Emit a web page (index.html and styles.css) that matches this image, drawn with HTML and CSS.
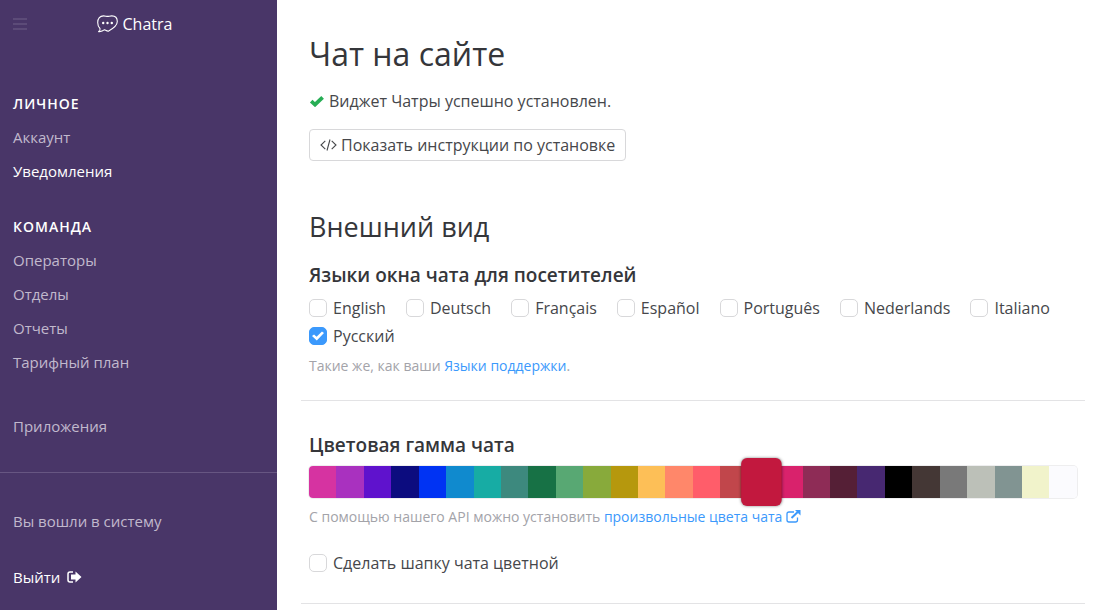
FILE: index.html
```html
<!DOCTYPE html>
<html lang="ru">
<head>
  <meta charset="UTF-8">
  <meta name="viewport" content="width=device-width, initial-scale=1.0">
  <title>Chatra</title>
  <link rel="stylesheet" href="styles.css">
</head>
<body>
<div class="app">
  <aside class="sidebar">
    <header class="topbar">
      <button type="button" class="menu-button" aria-label="Меню">
        <svg width="14" height="12" viewBox="0 0 14 12"><path d="M0 1h14M0 6h14M0 11h14" stroke="currentColor" stroke-width="2"/></svg>
      </button>
      <a href="#" class="brand">
        <svg width="21" height="18" viewBox="0 0 21 18" fill="none" stroke="currentColor">
          <path d="M1.6 16.6C3 15.8 3.400 14.900 3 13.500C1.300 12 .7 10 .7 7.600C.7 3.500 3 .9 6.500 .9C8.300 .9 9.400 1.400 10.600 1.400C11.800 1.400 13 .9 14.800 .9C18.300 .9 20.300 3.400 20.300 6.600C20.300 11 15.500 14 11.300 16.200C9.600 15.800 8.800 15.200 7.600 14.700C5.800 16.200 4 16.900 1.600 16.600Z" stroke-width="1.100" stroke-linejoin="round"/>
          <g fill="currentColor" stroke="none"><circle cx="6.200" cy="8" r="1.200"/><circle cx="10.500" cy="8" r="1.200"/><circle cx="14.800" cy="8" r="1.200"/></g>
        </svg>
        <span>Chatra</span>
      </a>
    </header>

    <nav class="nav">
      <h2 class="nav-title">Личное</h2>
      <a href="#" class="nav-link">Аккаунт</a>
      <a href="#" class="nav-link active">Уведомления</a>

      <h2 class="nav-title">Команда</h2>
      <a href="#" class="nav-link">Операторы</a>
      <a href="#" class="nav-link">Отделы</a>
      <a href="#" class="nav-link">Отчеты</a>
      <a href="#" class="nav-link">Тарифный план</a>

      <a href="#" class="nav-link nav-apps">Приложения</a>
    </nav>

    <footer class="session">
      <p>Вы вошли в систему</p>
      <a href="#" class="logout">Выйти
        <svg width="15" height="12" viewBox="0 0 15 12"><path d="M6 1H3Q1 1 1 3V9Q1 11 3 11H6" fill="none" stroke="currentColor" stroke-width="1.500"/><path d="M4 3.500H8.500V.5L14.500 6L8.500 11.500V8.500H4Z" fill="currentColor"/></svg>
      </a>
    </footer>
  </aside>

  <main class="content">
    <section class="section install">
      <h1>Чат на сайте</h1>
      <p class="status">
        <svg width="16" height="12" viewBox="0 0 16 12"><path d="M2.200 6.200L6 9.600L13.600 2.300" fill="none" stroke="currentColor" stroke-width="3.800"/></svg>
        Виджет Чатры успешно установлен.
      </p>
      <button type="button" class="button">
        <svg width="17" height="12" viewBox="0 0 17 12" fill="none" stroke="currentColor" stroke-width="1.100"><path d="M5.300 1.800L1 6L5.300 10.200M11.700 1.800L16 6L11.700 10.200M10 .5L7 11.500"/></svg>
        Показать инструкции по установке
      </button>
    </section>

    <section class="section languages">
      <h2>Внешний вид</h2>
      <h3>Языки окна чата для посетителей</h3>
      <div class="options">
        <label class="check"><input type="checkbox">English</label>
        <label class="check"><input type="checkbox">Deutsch</label>
        <label class="check"><input type="checkbox">Français</label>
        <label class="check"><input type="checkbox">Español</label>
        <label class="check"><input type="checkbox">Português</label>
        <label class="check"><input type="checkbox">Nederlands</label>
        <label class="check"><input type="checkbox">Italiano</label>
        <label class="check"><input type="checkbox" checked>Русский</label>
      </div>
      <p class="hint">Такие же, как ваши <a href="#">Языки поддержки</a>.</p>
    </section>

    <section class="section colors">
      <h3>Цветовая гамма чата</h3>
      <div class="palette" role="radiogroup" aria-label="Цветовая гамма чата">
        <input type="radio" name="color" class="c1" aria-label="#d633a1">
        <input type="radio" name="color" class="c2" aria-label="#a931bf">
        <input type="radio" name="color" class="c3" aria-label="#5f12cd">
        <input type="radio" name="color" class="c4" aria-label="#0c0c7f">
        <input type="radio" name="color" class="c5" aria-label="#0033f3">
        <input type="radio" name="color" class="c6" aria-label="#108ace">
        <input type="radio" name="color" class="c7" aria-label="#17aca4">
        <input type="radio" name="color" class="c8" aria-label="#3d897e">
        <input type="radio" name="color" class="c9" aria-label="#177145">
        <input type="radio" name="color" class="c10" aria-label="#58a873">
        <input type="radio" name="color" class="c11" aria-label="#88aa3b">
        <input type="radio" name="color" class="c12" aria-label="#b6980d">
        <input type="radio" name="color" class="c13" aria-label="#fdbf57">
        <input type="radio" name="color" class="c14" aria-label="#ff876a">
        <input type="radio" name="color" class="c15" aria-label="#ff5d6a">
        <input type="radio" name="color" class="c16" aria-label="#c1464b">
        <input type="radio" name="color" class="c17" aria-label="#c2183e" checked>
        <input type="radio" name="color" class="c18" aria-label="#d9226c">
        <input type="radio" name="color" class="c19" aria-label="#8e2c56">
        <input type="radio" name="color" class="c20" aria-label="#551f36">
        <input type="radio" name="color" class="c21" aria-label="#472871">
        <input type="radio" name="color" class="c22" aria-label="#000000">
        <input type="radio" name="color" class="c23" aria-label="#443735">
        <input type="radio" name="color" class="c24" aria-label="#797979">
        <input type="radio" name="color" class="c25" aria-label="#bcc0b8">
        <input type="radio" name="color" class="c26" aria-label="#819492">
        <input type="radio" name="color" class="c27" aria-label="#f1f3cb">
        <input type="radio" name="color" class="c28" aria-label="#fbfbfe">
      </div>
      <p class="hint">С помощью нашего API можно установить <a href="#">произвольные цвета чата <svg width="15" height="13" viewBox="0 0 15 13"><path d="M8 2H3Q1 2 1 4V10Q1 12 3 12H9.500Q11.500 12 11.500 10V7.500" fill="none" stroke="currentColor" stroke-width="1.300"/><path d="M5.500 8L12 1.800" stroke="currentColor" stroke-width="2"/><path d="M9 0H14.500V5.500Z" fill="currentColor"/></svg></a></p>
      <label class="check"><input type="checkbox">Сделать шапку чата цветной</label>
    </section>
  </main>
</div>
</body>
</html>
```
FILE: styles.css
```css
* {
  box-sizing: border-box;
}
body {
  font-family: "Open Sans", sans-serif;
  font-size: 16px;
  line-height: 24px;
  color: #46474b;
  background-color: #fff;
  margin: 0;
}
h1, h2, h3, p {
  margin: 0;
}
a {
  color: #3b99fc;
  text-decoration: none;
}
.app {
  display: flex;
  min-height: 100vh;
}

/* Sidebar */
.sidebar {
  flex: 0 0 277px;
  background-color: #493668;
  color: #c1b9cd;
  font-size: 15px;
}
.topbar {
  display: grid;
  grid-template-columns: 1fr auto 1fr;
  align-items: center;
  height: 48px;
  padding: 0 21px 0 13px;
}
.menu-button {
  display: flex;
  justify-self: start;
  padding: 0;
  border: none;
  background: none;
  color: #5c4b78;
  cursor: pointer;
}
.brand {
  display: flex;
  align-items: center;
  gap: 5px;
  color: #fff;
  font-size: 16px;
}
.nav {
  display: flex;
  flex-direction: column;
  padding: 39px 13px 29px;
  border-bottom: 1px solid #675682;
}
.nav-title {
  color: #fff;
  font-size: 14px;
  font-weight: 600;
  line-height: 33px;
  letter-spacing: 1px;
  text-transform: uppercase;
}
.nav-link + .nav-title {
  margin-top: 22px;
}
.nav-link {
  color: #c1b9cd;
  line-height: 34px;
}
.nav-link.active {
  color: #fff;
}
.nav-apps {
  margin-top: 30px;
}
.session {
  display: flex;
  flex-direction: column;
  gap: 32px;
  padding: 36px 13px 20px;
}
.logout {
  display: flex;
  align-items: center;
  gap: 7px;
  color: #fff;
}

/* Settings */
.content {
  flex: 1;
  min-width: 0;
  padding: 0 10px 0 24px;
}
.section {
  padding: 0 8px;
}
h1 {
  font-size: 32px;
  font-weight: 400;
  line-height: 44px;
}
h2 {
  font-size: 27px;
  font-weight: 400;
  line-height: 36px;
}
h1, .content h2, h3 {
  color: #35363a;
}
h3 {
  font-size: 19px;
  font-weight: 600;
  line-height: 28px;
}
.install {
  padding-top: 32px;
}
.status {
  display: flex;
  align-items: center;
  gap: 4px;
  margin: 13px 0 16px;
}
.status svg {
  color: #27ae55;
}
.button {
  display: inline-flex;
  align-items: center;
  gap: 4px;
  height: 32px;
  padding: 0 10px;
  border: 1px solid #d8d8da;
  border-radius: 4px;
  background-color: #fff;
  color: inherit;
  font: inherit;
  cursor: pointer;
}
.languages {
  padding-top: 48px;
  padding-bottom: 22px;
  border-bottom: 1px solid #e3e3e5;
}
.languages h3 {
  margin-top: 16px;
}
.options {
  display: flex;
  flex-wrap: wrap;
  column-gap: 20px;
  margin-top: 5px;
}
.check {
  display: inline-flex;
  align-items: center;
  gap: 6px;
  height: 28px;
}
.check input {
  appearance: none;
  display: grid;
  place-items: center;
  width: 18px;
  height: 18px;
  margin: 0;
  border: 1px solid #d8d8da;
  border-radius: 5px;
  background-color: #fff;
}
.check input:checked {
  border-color: #3b99fc;
  background-color: #3b99fc;
}
.check input:checked::before {
  content: "";
  width: 12px;
  height: 10px;
  background-color: #fff;
  clip-path: polygon(0 50%, 17% 35%, 38% 58%, 83% 5%, 100% 20%, 40% 95%);
}
.hint {
  margin-top: 4px;
  font-size: 14px;
  color: #a3a3a9;
}
.hint svg {
  vertical-align: -1px;
}
.colors {
  padding-top: 30px;
  padding-bottom: 25px;
  border-bottom: 1px solid #e3e3e5;
}
.palette {
  display: flex;
  height: 32px;
  margin: 7px 0;
  border-radius: 4px;
  box-shadow: 0 0 0 1px #eeeeef;
}
.palette input {
  appearance: none;
  flex: 1;
  min-width: 0;
  margin: 0;
  cursor: pointer;
}
.palette input:first-child {
  border-radius: 4px 0 0 4px;
}
.palette input:last-child {
  border-radius: 0 4px 4px 0;
}
.palette input:checked {
  z-index: 1;
  transform: scale(1.5);
  border-radius: 4px;
  box-shadow: 0 0 2px rgba(0,0,0,0.5);
}
.colors .check {
  margin-top: 20px;
}
.c1 { background-color: #d633a1; }
.c2 { background-color: #a931bf; }
.c3 { background-color: #5f12cd; }
.c4 { background-color: #0c0c7f; }
.c5 { background-color: #0033f3; }
.c6 { background-color: #108ace; }
.c7 { background-color: #17aca4; }
.c8 { background-color: #3d897e; }
.c9 { background-color: #177145; }
.c10 { background-color: #58a873; }
.c11 { background-color: #88aa3b; }
.c12 { background-color: #b6980d; }
.c13 { background-color: #fdbf57; }
.c14 { background-color: #ff876a; }
.c15 { background-color: #ff5d6a; }
.c16 { background-color: #c1464b; }
.c17 { background-color: #c2183e; }
.c18 { background-color: #d9226c; }
.c19 { background-color: #8e2c56; }
.c20 { background-color: #551f36; }
.c21 { background-color: #472871; }
.c22 { background-color: #000; }
.c23 { background-color: #443735; }
.c24 { background-color: #797979; }
.c25 { background-color: #bcc0b8; }
.c26 { background-color: #819492; }
.c27 { background-color: #f1f3cb; }
.c28 { background-color: #fbfbfe; }
```
